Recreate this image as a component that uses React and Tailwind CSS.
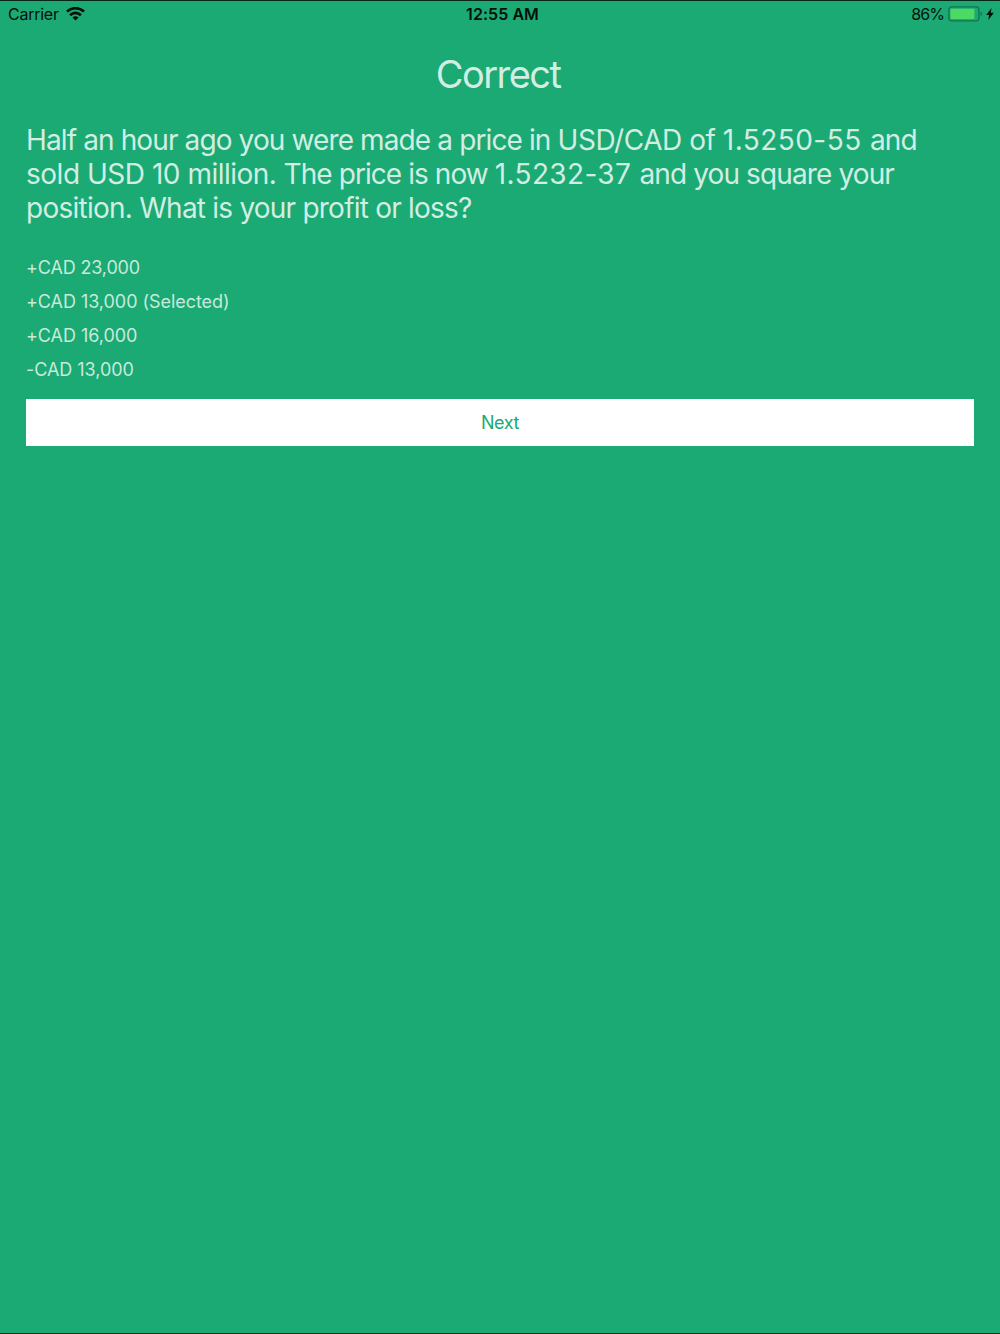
const questionLines = [
  [
    { text: "Half an hour ago you were made a price in ", tracking: "tracking-[-0.88px]" },
    { text: "USD/CAD of ", tracking: "tracking-[-0.46px]" },
    { text: "1.5250-55 ", tracking: "tracking-[0.45px]" },
    { text: "and", tracking: "tracking-[-0.8px]" },
  ],
  [
    { text: "sold USD 10 ", tracking: "tracking-[-0.48px]" },
    { text: "million. ", tracking: "tracking-[-0.53px]" },
    { text: "The price is now ", tracking: "tracking-[-0.93px]" },
    { text: "1.5232-37 ", tracking: "tracking-[0.36px]" },
    { text: "and you square your", tracking: "tracking-[-0.88px]" },
  ],
  [
    { text: "position. ", tracking: "tracking-[-0.74px]" },
    { text: "What is your profit or loss?", tracking: "tracking-[-0.78px]" },
  ],
];

const answers = [
  { text: "+CAD 23,000", tracking: "tracking-[-0.15px]" },
  { text: "+CAD 13,000 (Selected)", tracking: "tracking-[-0.05px]" },
  { text: "+CAD 16,000", tracking: "tracking-[-0.05px]" },
  { text: "-CAD 13,000", tracking: "tracking-[-0.05px]" },
];

function WifiIcon() {
  return (
    <svg width="19" height="14" viewBox="0 0 19 14" fill="none" stroke="#03110c" strokeWidth="2.7">
      <path d="M1 4.6C5.7 0.1 13.3 0.1 18 4.6" />
      <path d="M4.1 8.2C7.1 5.2 11.9 5.2 14.9 8.2" />
      <path d="M9.5 13.4L6.5 10.4C8.2 8.8 10.8 8.8 12.5 10.4Z" fill="#03110c" stroke="none" />
    </svg>
  );
}

function BatteryIcon() {
  return (
    <svg width="35" height="16" viewBox="0 0 35 16" fill="none">
      <rect x="0.9" y="0.9" width="30" height="14" rx="2.6" stroke="#127550" strokeWidth="1.3" />
      <rect x="2.4" y="2.7" width="24" height="10.4" rx="1" fill="#4cd964" />
      <path d="M32.6 5.6C34.4 6.3 34.4 9.5 32.6 10.2Z" fill="#127550" />
    </svg>
  );
}

function BoltIcon() {
  return (
    <svg width="8" height="12" viewBox="0 0 8 12" fill="#03110c">
      <path d="M5.6 0L0.1 6.9H3.2L2.2 12L7.9 4.8H4.7Z" />
    </svg>
  );
}

function StatusBar() {
  return (
    <header className="grid h-[26px] grid-cols-3 items-center pl-2 pr-[6px] text-base leading-[26px] text-[#03110c]">
      <div className="flex items-center gap-[7px]">
        <span className="tracking-[-0.25px]">Carrier</span>
        <WifiIcon />
      </div>
      <div className="pl-[3px] text-center font-semibold tracking-[0.05px]">12:55 AM</div>
      <div className="flex items-center justify-end">
        <span className="mr-1 tracking-[-0.9px]">86%</span>
        <BatteryIcon />
        <span className="ml-[3px]">
          <BoltIcon />
        </span>
      </div>
    </header>
  );
}

export default function App() {
  return (
    <div className="h-[1334px] w-[1000px] overflow-hidden border-y border-[#06261a] bg-[#1ba974] font-['Inter',sans-serif]">
      <StatusBar />
      <main className="px-[26px] pt-[23px]">
        <h1 className="pr-[4px] text-center text-[38px] leading-[48px] tracking-[-1.55px] text-[#d2eee3]">
          Correct
        </h1>

        <p className="mt-[25px] text-[28px] leading-[34px] text-[#d2eee3]">
          {questionLines.map((line, index) => (
            <span key={index} className="block whitespace-pre">
              {line.map((part) => (
                <span key={part.text} className={part.tracking}>
                  {part.text}
                </span>
              ))}
            </span>
          ))}
        </p>

        <ul className="mt-[26px] text-lg leading-[34px] text-[#c8eadc]">
          {answers.map((answer) => (
            <li key={answer.text}>
              <span className={answer.tracking}>{answer.text}</span>
            </li>
          ))}
        </ul>

        <button className="mt-[12px] block h-[47px] w-full bg-white text-lg tracking-[-0.4px] text-[#1ba974]">
          Next
        </button>
      </main>
    </div>
  );
}
